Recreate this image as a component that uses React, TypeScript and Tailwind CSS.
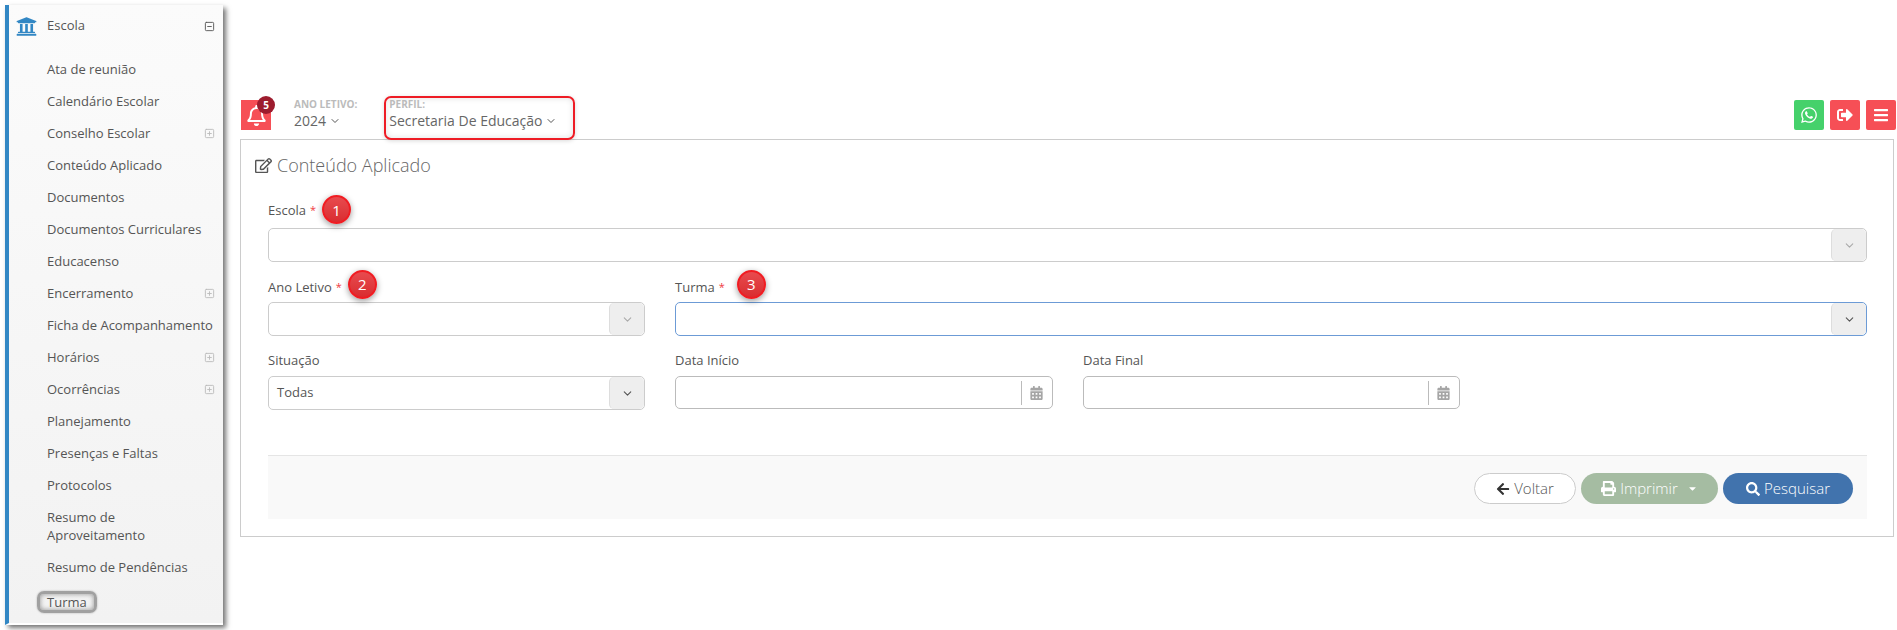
import React from 'react';
import { ChevronDown, SquareMinus, SquarePlus } from 'lucide-react';
import {
  FaUniversity,
  FaRegBell,
  FaWhatsapp,
  FaSignOutAlt,
  FaBars,
  FaRegEdit,
  FaCalendarAlt,
  FaArrowLeft,
  FaPrint,
  FaSearch,
  FaCaretDown,
} from 'react-icons/fa';

const menuItems = [
  { label: 'Ata de reunião' },
  { label: 'Calendário Escolar' },
  { label: 'Conselho Escolar', sub: true },
  { label: 'Conteúdo Aplicado' },
  { label: 'Documentos' },
  { label: 'Documentos Curriculares' },
  { label: 'Educacenso' },
  { label: 'Encerramento', sub: true },
  { label: 'Ficha de Acompanhamento' },
  { label: 'Horários', sub: true },
  { label: 'Ocorrências', sub: true },
  { label: 'Planejamento' },
  { label: 'Presenças e Faltas' },
  { label: 'Protocolos' },
  { label: 'Resumo de Aproveitamento', wrap: true },
  { label: 'Resumo de Pendências' },
];

const Sidebar = () => (
  <aside className="w-[218px] h-[620px] ml-[5px] mt-[5px] shrink-0 border-l-4 border-[#3287c4] border-b-2 border-b-white bg-gradient-to-b from-[#fbfbfb] to-[#f2f2f2] shadow-[3px_3px_5px_rgba(0,0,0,0.55)]">
    <div className="h-[48px] flex items-center pl-[7px] pr-[8px] pb-[6px] text-[#555]">
      <FaUniversity className="w-[21px] h-[21px] text-[#3287c4]" />
      <span className="ml-[10px] flex-1">Escola</span>
      <SquareMinus className="w-[11px] h-[11px] text-[#555]" />
    </div>
    <nav>
      {menuItems.map((item) => (
        <div key={item.label} className="flex items-start pl-[38px] pr-[8px] py-[7px] leading-[18px] text-[#555]">
          <span className={`flex-1 ${item.wrap ? 'max-w-[140px]' : ''}`}>{item.label}</span>
          {item.sub && <SquarePlus className="w-[11px] h-[11px] mt-[4px] text-[#bbb]" />}
        </div>
      ))}
      <div className="pl-[28px] mt-[8px]">
        <span className="inline-block w-[60px] h-[22px] pl-[7px] leading-[16px] text-[#555] border-[3px] border-[#a0a0a0] rounded-[7px] shadow-[inset_0_0_5px_rgba(0,0,0,0.4),0_0_2px_rgba(0,0,0,0.3)]">
          Turma
        </span>
      </div>
    </nav>
  </aside>
);

const Step = ({ n, className }: { n: number; className: string }) => (
  <span
    className={`inline-flex items-center justify-center w-[29px] h-[29px] rounded-full bg-gradient-to-b from-[#e84a4e] to-[#d92c30] border-2 border-[#f01c22] text-white text-[15px] shadow-[0_2px_6px_rgba(0,0,0,0.4)] ${className}`}
  >
    {n}
  </span>
);

const Select = ({ value, focus, dim }: { value?: string; focus?: boolean; dim?: boolean }) => (
  <div className={`h-[34px] flex items-center rounded-[5px] border ${focus ? 'border-[#6c9bd6]' : 'border-[#ccc]'}`}>
    <span className="flex-1 pl-[8px] text-[#555]">{value}</span>
    <span className="w-[35px] h-full flex items-center justify-center bg-[#eee] border-l border-[#ddd] rounded-[5px]">
      <ChevronDown className={`w-[13px] h-[13px] ${dim ? 'text-[#aaa]' : 'text-[#555]'}`} />
    </span>
  </div>
);

const DateInput = () => (
  <div className="h-[33px] flex items-center justify-end rounded-[5px] border border-[#bbb]">
    <span className="w-[31px] h-[24px] flex items-center justify-center border-l border-[#bbb] pr-[2px]">
      <FaCalendarAlt className="w-[13px] h-[14px] text-[#a5a5a5]" />
    </span>
  </div>
);

export default function App() {
  return (
    <div className="w-[1897px] h-[630px] overflow-hidden bg-white flex font-['Open_Sans',sans-serif] text-[13px]">
      <Sidebar />

      <main className="flex-1 ml-[17px] pt-[96px]">
        {/* Top bar */}
        <div className="h-[43px] flex items-start text-[#777]">
          <div className="relative ml-px mt-[4px] w-[30px] h-[30px] bg-[#f64f56] flex items-center justify-center">
            <FaRegBell className="w-[21px] h-[21px] text-white" />
            <span className="absolute -top-[4px] left-[16px] w-[18px] h-[18px] rounded-full bg-[#9d1c2e] text-white text-[10px] font-bold flex items-center justify-center">
              5
            </span>
          </div>
          <div className="ml-[23px] mt-[1px]">
            <div className="text-[10px] leading-[14px] font-bold text-[#bbb]">ANO LETIVO:</div>
            <div className="flex items-center gap-[3px] text-[14px] leading-[20px] text-[#666]">
              2024 <ChevronDown className="w-[12px] h-[12px] text-[#555]" />
            </div>
          </div>
          <div className="relative z-10 ml-[27px] w-[191px] h-[44px] border-2 border-[#ee1c25] rounded-[7px] pl-[3px] shadow-[inset_0_0_6px_rgba(0,0,0,0.12),0_1px_4px_rgba(0,0,0,0.15)]">
            <div className="text-[10px] leading-[14px] font-bold text-[#bbb] -mt-px">PERFIL:</div>
            <div className="flex items-center gap-[2px] text-[14px] leading-[20px] text-[#666]">
              Secretaria De Educação <ChevronDown className="w-[12px] h-[12px] text-[#555]" />
            </div>
          </div>
          <div className="ml-auto mr-px mt-[4px] flex gap-[6px]">
            <span className="w-[30px] h-[30px] rounded-[2px] bg-[#45d16b] flex items-center justify-center">
              <FaWhatsapp className="w-[18px] h-[18px] text-white" />
            </span>
            <span className="w-[30px] h-[30px] rounded-[2px] bg-[#f64f56] flex items-center justify-center">
              <FaSignOutAlt className="w-[16px] h-[16px] text-white" />
            </span>
            <span className="w-[30px] h-[30px] rounded-[2px] bg-[#f64f56] flex items-center justify-center">
              <FaBars className="w-[16px] h-[16px] text-white" />
            </span>
          </div>
        </div>

        {/* Panel */}
        <section className="mr-[3px] h-[398px] border border-[#ccc] pl-[27px] pr-[26px]">
          <div className="h-[61px] -ml-[13px] flex items-center gap-[5px] text-[#666] pb-[10px]">
            <FaRegEdit className="w-[17px] h-[17px] text-[#555]" />
            <h1 className="text-[18px] font-light">Conteúdo Aplicado</h1>
          </div>

          <div className="h-[18px] leading-[18px] mb-[9px] text-[#555] flex items-center">
            Escola <span className="text-[#ef3a3f] text-[11px] ml-[4px]">*</span>
            <Step n={1} className="ml-[6px] -mt-[1px]" />
          </div>
          <Select dim />

          <div className="mt-[16px] flex gap-[30px]">
            <div className="w-[377px]">
              <div className="h-[18px] leading-[18px] mb-[6px] text-[#555] flex items-center">
                Ano Letivo <span className="text-[#ef3a3f] text-[11px] ml-[4px]">*</span>
                <Step n={2} className="ml-[6px] -mt-[6px]" />
              </div>
              <Select dim />
            </div>
            <div className="flex-1">
              <div className="h-[18px] leading-[18px] mb-[6px] text-[#555] flex items-center">
                Turma <span className="text-[#ef3a3f] text-[11px] ml-[4px]">*</span>
                <Step n={3} className="ml-[12px] -mt-[6px]" />
              </div>
              <Select focus />
            </div>
          </div>

          <div className="mt-[15px] flex gap-[30px]">
            <div className="w-[377px]">
              <div className="h-[18px] leading-[18px] mb-[7px] text-[#555]">Situação</div>
              <Select value="Todas" />
            </div>
            <div className="w-[378px]">
              <div className="h-[18px] leading-[18px] mb-[7px] text-[#555]">Data Início</div>
              <DateInput />
            </div>
            <div className="w-[377px]">
              <div className="h-[18px] leading-[18px] mb-[7px] text-[#555]">Data Final</div>
              <DateInput />
            </div>
          </div>

          <footer className="mt-[45px] h-[64px] bg-[#f9f9f9] border-t border-[#e5e5e5] flex items-start justify-end gap-[5px] pt-[17px] pr-[14px] text-[15px] font-light">
            <button className="w-[102px] h-[31px] rounded-full bg-white border border-[#ccc] text-[#555] flex items-center justify-center gap-[4px]">
              <FaArrowLeft className="w-[14px] h-[14px] text-[#333]" /> Voltar
            </button>
            <button className="w-[137px] h-[31px] rounded-full bg-[#a5bca2] text-white flex items-center justify-center gap-[4px]">
              <FaPrint className="w-[15px] h-[15px]" /> Imprimir
              <FaCaretDown className="w-[11px] h-[11px] ml-[5px]" />
            </button>
            <button className="w-[130px] h-[31px] rounded-full bg-[#4173ad] text-white flex items-center justify-center gap-[4px]">
              <FaSearch className="w-[14px] h-[14px]" /> Pesquisar
            </button>
          </footer>
        </section>
      </main>
    </div>
  );
}
